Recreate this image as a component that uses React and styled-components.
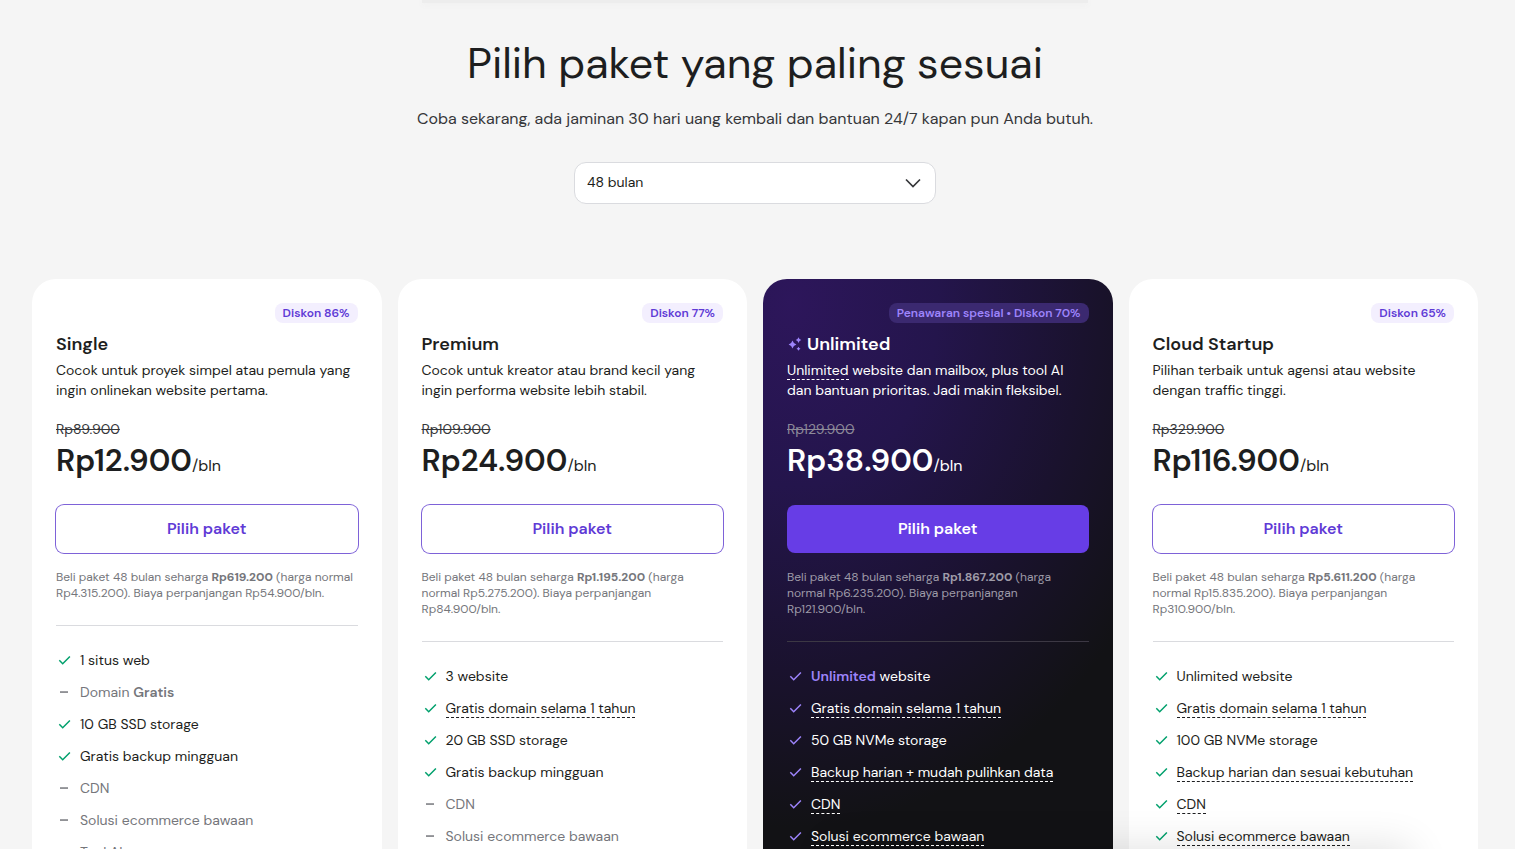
import React from "react";
import styled, { createGlobalStyle, css } from "styled-components";

const GlobalStyle = createGlobalStyle`
  *, *::before, *::after { box-sizing: border-box; }
  body {
    margin: 0;
    background: #f5f5f5;
    color: #1d1e20;
    font-family: "DM Sans", Inter, "Liberation Sans", sans-serif;
    font-size: 14px;
    line-height: 20px;
  }
  h1, h2, p, ul { margin: 0; padding: 0; }
`;

const Page = styled.main`
  position: relative;
  height: 100vh;
  overflow: hidden;
  padding: 0 37px 0 32px;
  display: flex;
  flex-direction: column;
`;

const TopShade = styled.div`
  flex: none;
  width: 46%;
  height: 3px;
  margin: 0 auto;
  background: #ededed;
  box-shadow: 0 1px 6px #ededed;
`;

const BottomShade = styled.div`
  position: absolute;
  top: 100%;
  left: 55%;
  right: 7%;
  height: 40px;
  box-shadow: 0 0 40px 2px rgba(0, 0, 0, 0.12);
  pointer-events: none;
`;

const Header = styled.header`
  flex: none;
  display: flex;
  flex-direction: column;
  align-items: center;
  padding: 32px 0 75px;
`;

const Heading = styled.h1`
  font-size: 43px;
  line-height: 56px;
  font-weight: 400;
  text-align: center;
`;

const Lead = styled.p`
  margin-top: 16px;
  font-size: 16px;
  line-height: 24px;
  color: #36373a;
  text-align: center;
`;

const PeriodField = styled.div`
  display: grid;
  align-items: center;
  width: 100%;
  max-width: 362px;
  margin-top: 31px;

  > * { grid-area: 1 / 1; }
  > svg {
    justify-self: end;
    margin-right: 14px;
    pointer-events: none;
  }
`;

const PeriodSelect = styled.select`
  appearance: none;
  width: 100%;
  height: 42px;
  padding: 0 40px 2px 12px;
  border: 1px solid #dadbdf;
  border-radius: 12px;
  background: #fff;
  color: #1d1e20;
  font: inherit;
`;

const Plans = styled.section`
  flex: 1;
  min-height: 0;
  display: grid;
  grid-template-columns: repeat(4, minmax(0, 1fr));
  gap: 16px;
`;

const light = {
  bg: "#fff", text: "#1d1e20", old: "#36373a", muted: "#75767b", line: "#dadbdf",
  badgeBg: "#f3effe", badge: "#5f3bd6", check: "#00a06c", btnBg: "#fff", btn: "#5f3bd6",
};
const dark = {
  bg: "radial-gradient(ellipse 120% 90% at 8% 4%, #2d165b 0%, #24154c 35%, #1a122e 70%, #121215 100%)",
  text: "#fff", old: "#8d8a99", muted: "#9e9ba8", line: "#3c3844",
  badgeBg: "#3b2970", badge: "#9d84fb", check: "#9d84fb", btnBg: "#673de6", btn: "#fff",
};

const Card = styled.article`
  display: flex;
  flex-direction: column;
  padding: 24px 24px 0;
  border-radius: 24px 24px 0 0;
  background: ${(p) => p.$t.bg};
  color: ${(p) => p.$t.text};
`;

const Badge = styled.span`
  align-self: flex-end;
  padding: 0 8px;
  border-radius: 8px;
  background: ${(p) => p.$t.badgeBg};
  color: ${(p) => p.$t.badge};
  font-size: 12px;
  line-height: 20px;
  font-weight: 600;
`;

const PlanName = styled.h2`
  display: flex;
  align-items: center;
  gap: 4px;
  margin-top: 8px;
  font-size: 18px;
  line-height: 26px;
  font-weight: 600;
`;

const Description = styled.p`
  margin-top: 3px;
  white-space: pre-line;
`;

const OldPrice = styled.s`
  margin-top: 20px;
  line-height: 18px;
  color: ${(p) => p.$t.old};
`;

const Price = styled.p`
  margin-top: 3px;
  font-size: 31px;
  line-height: 40px;
  font-weight: 600;
`;

const PriceUnit = styled.span`
  font-size: 16px;
  line-height: 16px;
  font-weight: 400;
`;

const ChooseButton = styled.button`
  height: 48px;
  flex: none;
  margin-top: 24px;
  border: 0;
  border-radius: 8px;
  background: ${(p) => p.$t.btnBg};
  color: ${(p) => p.$t.btn};
  font: inherit;
  font-size: 16px;
  font-weight: 600;
  cursor: pointer;
  ${(p) => p.$outlined && css`box-shadow: 0 0 0 1px #7e62d8;`}
`;

const Note = styled.p`
  margin-top: 16px;
  padding-bottom: 24px;
  border-bottom: 1px solid ${(p) => p.$t.line};
  font-size: 12px;
  line-height: 16px;
  color: ${(p) => p.$t.muted};
  white-space: pre-line;
`;

const Features = styled.ul`
  display: flex;
  flex-direction: column;
  gap: 12px;
  margin-top: 24px;
  list-style: none;
`;

const Feature = styled.li`
  display: flex;
  align-items: center;
  gap: 8px;
  color: ${(p) => (p.$off ? "#75767b" : "inherit")};

  > svg { flex: none; }
  strong { font-weight: 600; }
`;

const Accent = styled.strong`
  color: #9d84fb;
`;

const Hint = styled.span`
  border-bottom: 1px dashed currentColor;
`;

const Chevron = () => (
  <svg width="18" height="18" viewBox="0 0 18 18" fill="none" stroke="#36373a" strokeWidth="1.7" aria-hidden="true">
    <path d="M2 5.5l7 7 7-7" />
  </svg>
);

const Check = ({ color }) => (
  <svg width="16" height="16" viewBox="0 0 16 16" fill="none" stroke={color} strokeWidth="1.5" aria-hidden="true">
    <path d="M3.3 8.3l3.4 3.4 7.2-7.2" />
  </svg>
);

const Dash = () => (
  <svg width="16" height="16" viewBox="0 0 16 16" fill="#75767b" aria-hidden="true">
    <path d="M4 7.3h8v1.5H4z" />
  </svg>
);

const Sparkles = () => (
  <svg width="16" height="16" viewBox="0 0 16 16" fill="#9d84fb" aria-hidden="true">
    <path d="M5.5 4.6l1.4 2.5 2.5 1.4-2.5 1.4-1.4 2.5-1.4-2.5-2.5-1.4 2.5-1.4z" />
    <path d="M11.5 1.3l1 1.8 1.8 1-1.8 1-1 1.8-1-1.8-1.8-1 1.8-1z" />
    <path d="M11.5 10.8l.8 1.2 1.2.8-1.2.8-.8 1.2-.8-1.2-1.2-.8 1.2-.8z" />
  </svg>
);

const plans = [
  {
    name: "Single",
    badge: "Diskon 86%",
    description: "Cocok untuk proyek simpel atau pemula yang\ningin onlinekan website pertama.",
    old: "Rp89.900",
    price: "Rp12.900",
    note: <>Beli paket 48 bulan seharga <strong>Rp619.200</strong> {"(harga normal\nRp4.315.200). Biaya perpanjangan Rp54.900/bln."}</>,
    features: [
      { text: "1 situs web" },
      { text: <>Domain <strong>Gratis</strong></>, off: true },
      { text: "10 GB SSD storage" },
      { text: "Gratis backup mingguan" },
      { text: "CDN", off: true },
      { text: "Solusi ecommerce bawaan", off: true },
      { text: "Tool AI", off: true },
    ],
  },
  {
    name: "Premium",
    badge: "Diskon 77%",
    description: "Cocok untuk kreator atau brand kecil yang\ningin performa website lebih stabil.",
    old: "Rp109.900",
    price: "Rp24.900",
    note: <>Beli paket 48 bulan seharga <strong>Rp1.195.200</strong> {"(harga\nnormal Rp5.275.200). Biaya perpanjangan\nRp84.900/bln."}</>,
    features: [
      { text: "3 website" },
      { text: "Gratis domain selama 1 tahun", hint: true },
      { text: "20 GB SSD storage" },
      { text: "Gratis backup mingguan" },
      { text: "CDN", off: true },
      { text: "Solusi ecommerce bawaan", off: true },
    ],
  },
  {
    name: "Unlimited",
    featured: true,
    badge: "Penawaran spesial • Diskon 70%",
    description: <><Hint>Unlimited</Hint>{" website dan mailbox, plus tool AI\ndan bantuan prioritas. Jadi makin fleksibel."}</>,
    old: "Rp129.900",
    price: "Rp38.900",
    note: <>Beli paket 48 bulan seharga <strong>Rp1.867.200</strong> {"(harga\nnormal Rp6.235.200). Biaya perpanjangan\nRp121.900/bln."}</>,
    features: [
      { text: <><Accent>Unlimited</Accent> website</> },
      { text: "Gratis domain selama 1 tahun", hint: true },
      { text: "50 GB NVMe storage" },
      { text: "Backup harian + mudah pulihkan data", hint: true },
      { text: "CDN", hint: true },
      { text: "Solusi ecommerce bawaan", hint: true },
    ],
  },
  {
    name: "Cloud Startup",
    badge: "Diskon 65%",
    description: "Pilihan terbaik untuk agensi atau website\ndengan traffic tinggi.",
    old: "Rp329.900",
    price: "Rp116.900",
    note: <>Beli paket 48 bulan seharga <strong>Rp5.611.200</strong> {"(harga\nnormal Rp15.835.200). Biaya perpanjangan\nRp310.900/bln."}</>,
    features: [
      { text: "Unlimited website" },
      { text: "Gratis domain selama 1 tahun", hint: true },
      { text: "100 GB NVMe storage" },
      { text: "Backup harian dan sesuai kebutuhan", hint: true },
      { text: "CDN", hint: true },
      { text: "Solusi ecommerce bawaan", hint: true },
    ],
  },
];

function PlanCard({ plan }) {
  const t = plan.featured ? dark : light;
  return (
    <Card $t={t}>
      <Badge $t={t}>{plan.badge}</Badge>
      <PlanName>
        {plan.featured && <Sparkles />}
        {plan.name}
      </PlanName>
      <Description>{plan.description}</Description>
      <OldPrice $t={t}>{plan.old}</OldPrice>
      <Price>{plan.price}<PriceUnit>/bln</PriceUnit></Price>
      <ChooseButton type="button" $t={t} $outlined={!plan.featured}>Pilih paket</ChooseButton>
      <Note $t={t}>{plan.note}</Note>
      <Features>
        {plan.features.map((f, i) => (
          <Feature key={i} $off={f.off}>
            {f.off ? <Dash /> : <Check color={t.check} />}
            <span>{f.hint ? <Hint>{f.text}</Hint> : f.text}</span>
          </Feature>
        ))}
      </Features>
    </Card>
  );
}

export default function App() {
  return (
    <Page>
      <GlobalStyle />
      <TopShade />
      <Header>
        <Heading id="plans-heading">Pilih paket yang paling sesuai</Heading>
        <Lead>Coba sekarang, ada jaminan 30 hari uang kembali dan bantuan 24/7 kapan pun Anda butuh.</Lead>
        <PeriodField>
          <PeriodSelect aria-labelledby="plans-heading" defaultValue="48">
            <option value="48">48 bulan</option>
          </PeriodSelect>
          <Chevron />
        </PeriodField>
      </Header>
      <Plans>
        {plans.map((plan) => <PlanCard key={plan.name} plan={plan} />)}
      </Plans>
      <BottomShade />
    </Page>
  );
}
